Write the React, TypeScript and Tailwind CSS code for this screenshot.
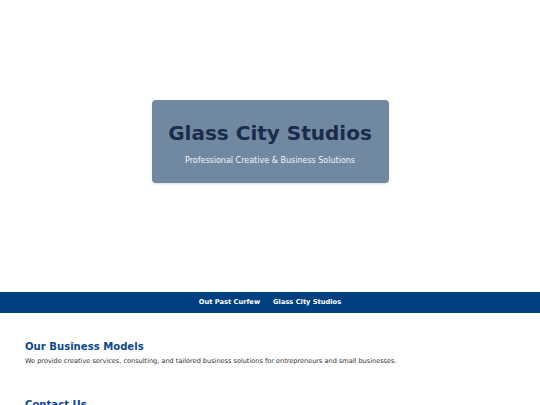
import React from "react";

const navLinks = ["Out Past Curfew", "Glass City Studios"];

export default function App() {
  return (
    <div
      className="min-h-screen bg-white"
      style={{ fontFamily: '"DejaVu Sans", Verdana, sans-serif' }}
    >
      {/* Hero */}
      <header className="flex h-[292px] items-start justify-center pt-[100px]">
        <div className="flex h-[83px] w-[237px] flex-col items-center justify-center rounded-[4px] bg-[#7188a1] pt-[4px] shadow-sm">
          <h1 className="text-[20px] font-bold leading-none text-[#1b2b4b]">
            Glass City Studios
          </h1>
          <p className="mt-[14px] text-[8px] leading-none text-[#f3f5f8]">
            Professional Creative &amp; Business Solutions
          </p>
        </div>
      </header>

      {/* Nav */}
      <nav className="flex h-[21px] items-center justify-center gap-[13px] bg-[#003f80]">
        {navLinks.map((link) => (
          <a key={link} href="#" className="text-[6.7px] font-bold text-white">
            {link}
          </a>
        ))}
      </nav>

      {/* Content */}
      <main className="px-[25px] pt-[29px]">
        <section>
          <h2 className="text-[10.1px] font-bold leading-none text-[#0b4a8b]">
            Our Business Models
          </h2>
          <p className="mt-[6px] text-[6.56px] leading-none text-[#333]">
            We provide creative services, consulting, and tailored business solutions for entrepreneurs and small businesses.
          </p>
        </section>
        <section className="mt-[35px]">
          <h2 className="text-[10.1px] font-bold leading-none text-[#0b4a8b]">
            Contact Us
          </h2>
        </section>
      </main>
    </div>
  );
}
